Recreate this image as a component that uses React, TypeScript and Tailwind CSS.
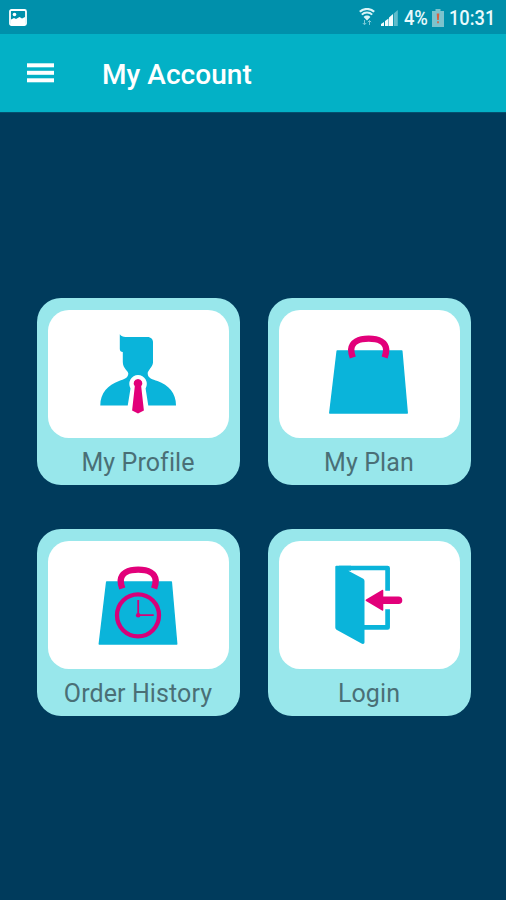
import React from 'react';

function StatusBar() {
    return (
        <div className="h-[34px] bg-[#0090ab] flex items-center justify-between pl-[9px] pr-[11px] text-[#e9fafc]">
            <svg className="mt-px" width="18" height="17" viewBox="0 0 18 17">
                <rect x="1" y="1" width="16" height="15" rx="1.5" fill="none" stroke="#ffffff" strokeWidth="1.8" />
                <path d="M2 15v-4.500l3-1.500 2 1L10.500 8 13 9.500l3-1.500v7Z" fill="#ffffff" />
                <circle cx="5.500" cy="5.500" r="1.800" fill="#ffffff" />
            </svg>
            <div className="flex items-center">
                <svg width="16" height="18" viewBox="0 0 16 18" fill="none">
                    <path d="M.8 3.800C4.700 0 11.300 0 15.200 3.800" stroke="#d9f4f7" strokeWidth="2.100" />
                    <path d="M2.800 6.600c2.900-2.800 7.500-2.800 10.400 0" stroke="#d9f4f7" strokeWidth="2" />
                    <path d="M4.600 9c1.900-1.900 4.900-1.900 6.800 0L8 12.500Z" fill="#d9f4f7" />
                    <path d="M5.500 12v4.500M3.800 15l1.700 1.800 1.700-1.800M10.500 17v-4.500M8.800 14.200l1.700-1.700 1.700 1.700" stroke="#7fcbd8" strokeWidth="1" />
                </svg>
                <svg className="ml-[5px] mt-[2px]" width="19" height="18" viewBox="0 0 19 18">
                    <path d="M1 17v-2l3-2v4ZM5 17v-5l3.500-2.500V17ZM9 17V8.500l4-3.500v12Z" fill="#f2fcfd" />
                    <path d="M13.800 17V4.500l4-3.500v16Z" fill="#5fbccb" />
                </svg>
                <span className="ml-[5px] mt-px w-[24px] origin-left scale-x-[0.920] text-[20px] leading-none font-medium tracking-[-0.300px]">4%</span>
                <svg className="ml-[4px] mt-[2px]" width="12" height="18" viewBox="0 0 12 18">
                    <path d="M3.500 0h5v2H12v16H0V2h3.500Z" fill="#7cc3cd" />
                    <path d="M4.700 4.500h2.600l-.5 6.500H5.200ZM5.200 12.200h1.600v2H5.200Z" fill="#d9603f" />
                </svg>
                <span className="ml-[5px] mt-[3px] w-[46px] origin-left scale-x-[0.890] text-[20.500px] leading-none font-medium">10:31</span>
            </div>
        </div>
    );
}

function ProfileIcon() {
    return (
        <svg width="84" height="84" viewBox="0 0 84 84">
            <path
                d="M23.800 2.300C25 4 27 5 29.500 5H51.500C55 5 57 7.500 57 10V30.500C56.700 35 51.500 38.500 51.700 41.500C51.800 46.500 56.500 47.300 61.500 49C72.500 53 80 61 80 73.500H4.300C4.300 61 12 53 23 49C28 47.300 32.300 46 32.300 41.500C32.300 39 26.800 36.500 26.800 30V20C25 19.800 23.800 19 23.800 17Z"
                fill="#0ab4da"
            />
            <path d="M42 43a9 9 0 0 1 7.600 13.500L52.500 75 50.500 84H33.500L31.500 75 34.500 56.500A9 9 0 0 1 42 43Z" fill="#ffffff" />
            <path d="M42 47a4.300 4.300 0 0 1 3.200 7.200L47.900 78.500 42 81.500 36.100 78.500 38.800 54.200A4.300 4.300 0 0 1 42 47Z" fill="#e2007a" />
        </svg>
    );
}

function Bag() {
    return (
        <>
            <path
                d="M10.200 19H74.800L80.200 81H2.800Z"
                fill="#0ab4da"
                stroke="#0ab4da"
                strokeWidth="1.500"
                strokeLinejoin="round"
            />
            <path
                d="M25.800 25.500C24.500 22 24.200 20 24.200 17.500C24.500 10.500 31.500 6.600 41.700 6.600S58.900 10.500 59.200 17.500C59.200 20 58.900 22 57.600 25.500"
                fill="none"
                stroke="#e2007a"
                strokeWidth="6.400"
            />
        </>
    );
}

function PlanIcon() {
    return (
        <svg width="84" height="84" viewBox="0 0 84 84">
            <Bag />
        </svg>
    );
}

function HistoryIcon() {
    return (
        <svg width="84" height="84" viewBox="-0.500 0 84 84">
            <Bag />
            <g fill="none" stroke="#d6007a">
                <circle cx="41.500" cy="52.300" r="21" strokeWidth="4.300" />
                <path d="M41.700 37V52.200H57.200" strokeWidth="1.800" />
            </g>
            <circle cx="41.700" cy="52.200" r="2.300" fill="#d6007a" />
        </svg>
    );
}

function LoginIcon() {
    return (
        <svg width="84" height="84" viewBox="0 0 84 84">
            <path d="M12 5H60.600V27.700M60.600 46.300V64.400H36" fill="none" stroke="#0ab4da" strokeWidth="4.700" strokeLinejoin="round" />
            <path
                d="M9.300 2.700H24V7.700H21.300L36.300 15.700Q37.500 16.400 37.500 18V79.500Q37.500 81.300 35 80.800L9.500 66.700Q8.300 66 8.300 64.500V3.700Q8.300 2.700 9.300 2.700Z"
                fill="#0ab4da"
            />
            <path
                d="M39 36.600 55 26.900Q56.300 26.300 56.300 27.700V33.400H71.500A3.800 3.800 0 0 1 71.500 41H56.300V46.800Q56.300 48.200 55 47.500L39 38Q38 37.300 39 36.600Z"
                fill="#e2007a"
            />
        </svg>
    );
}

const tiles = [
    { label: 'My Profile', icon: <ProfileIcon /> },
    { label: 'My Plan', icon: <PlanIcon /> },
    { label: 'Order History', icon: <HistoryIcon /> },
    { label: 'Login', icon: <LoginIcon /> },
];

export default function App() {
    return (
        <div className="w-[506px] h-[900px] flex flex-col overflow-hidden bg-[#003b5c] font-[Roboto,sans-serif]">
            <StatusBar />

            {/* Toolbar */}
            <header className="h-[79px] shrink-0 bg-[#03b1c6] border-b border-[#04506f] flex items-center pl-[26.500px]">
                <button aria-label="Menu" className="w-[27px] flex">
                    <svg width="27" height="20" viewBox="0 0 27 20" fill="#ffffff">
                        <rect y="0.300" width="27" height="4" />
                        <rect y="7.800" width="27" height="4" />
                        <rect y="15.300" width="27" height="4" />
                    </svg>
                </button>
                <h1 className="ml-[48.500px] mt-[4px] text-[28px] leading-none font-medium tracking-[0.050px] text-white whitespace-nowrap">My Account</h1>
            </header>

            {/* Menu tiles */}
            <main className="mt-[185px] px-[37px] grid grid-cols-[203px_203px] gap-x-[28px] gap-y-[44px]">
                {tiles.map((tile) => (
                    <button
                        key={tile.label}
                        className="h-[187px] rounded-[24px] bg-[#98e7eb] flex flex-col items-center pt-[11.500px] pr-px"
                    >
                        <span className="w-[181px] h-[128.500px] shrink-0 rounded-[21px] bg-white flex items-center justify-center">
                            {tile.icon}
                        </span>
                        <span className="mt-[12px] text-[25px] leading-[26px] tracking-[0.100px] text-[#4a6f76] whitespace-nowrap">{tile.label}</span>
                    </button>
                ))}
            </main>
        </div>
    );
}
